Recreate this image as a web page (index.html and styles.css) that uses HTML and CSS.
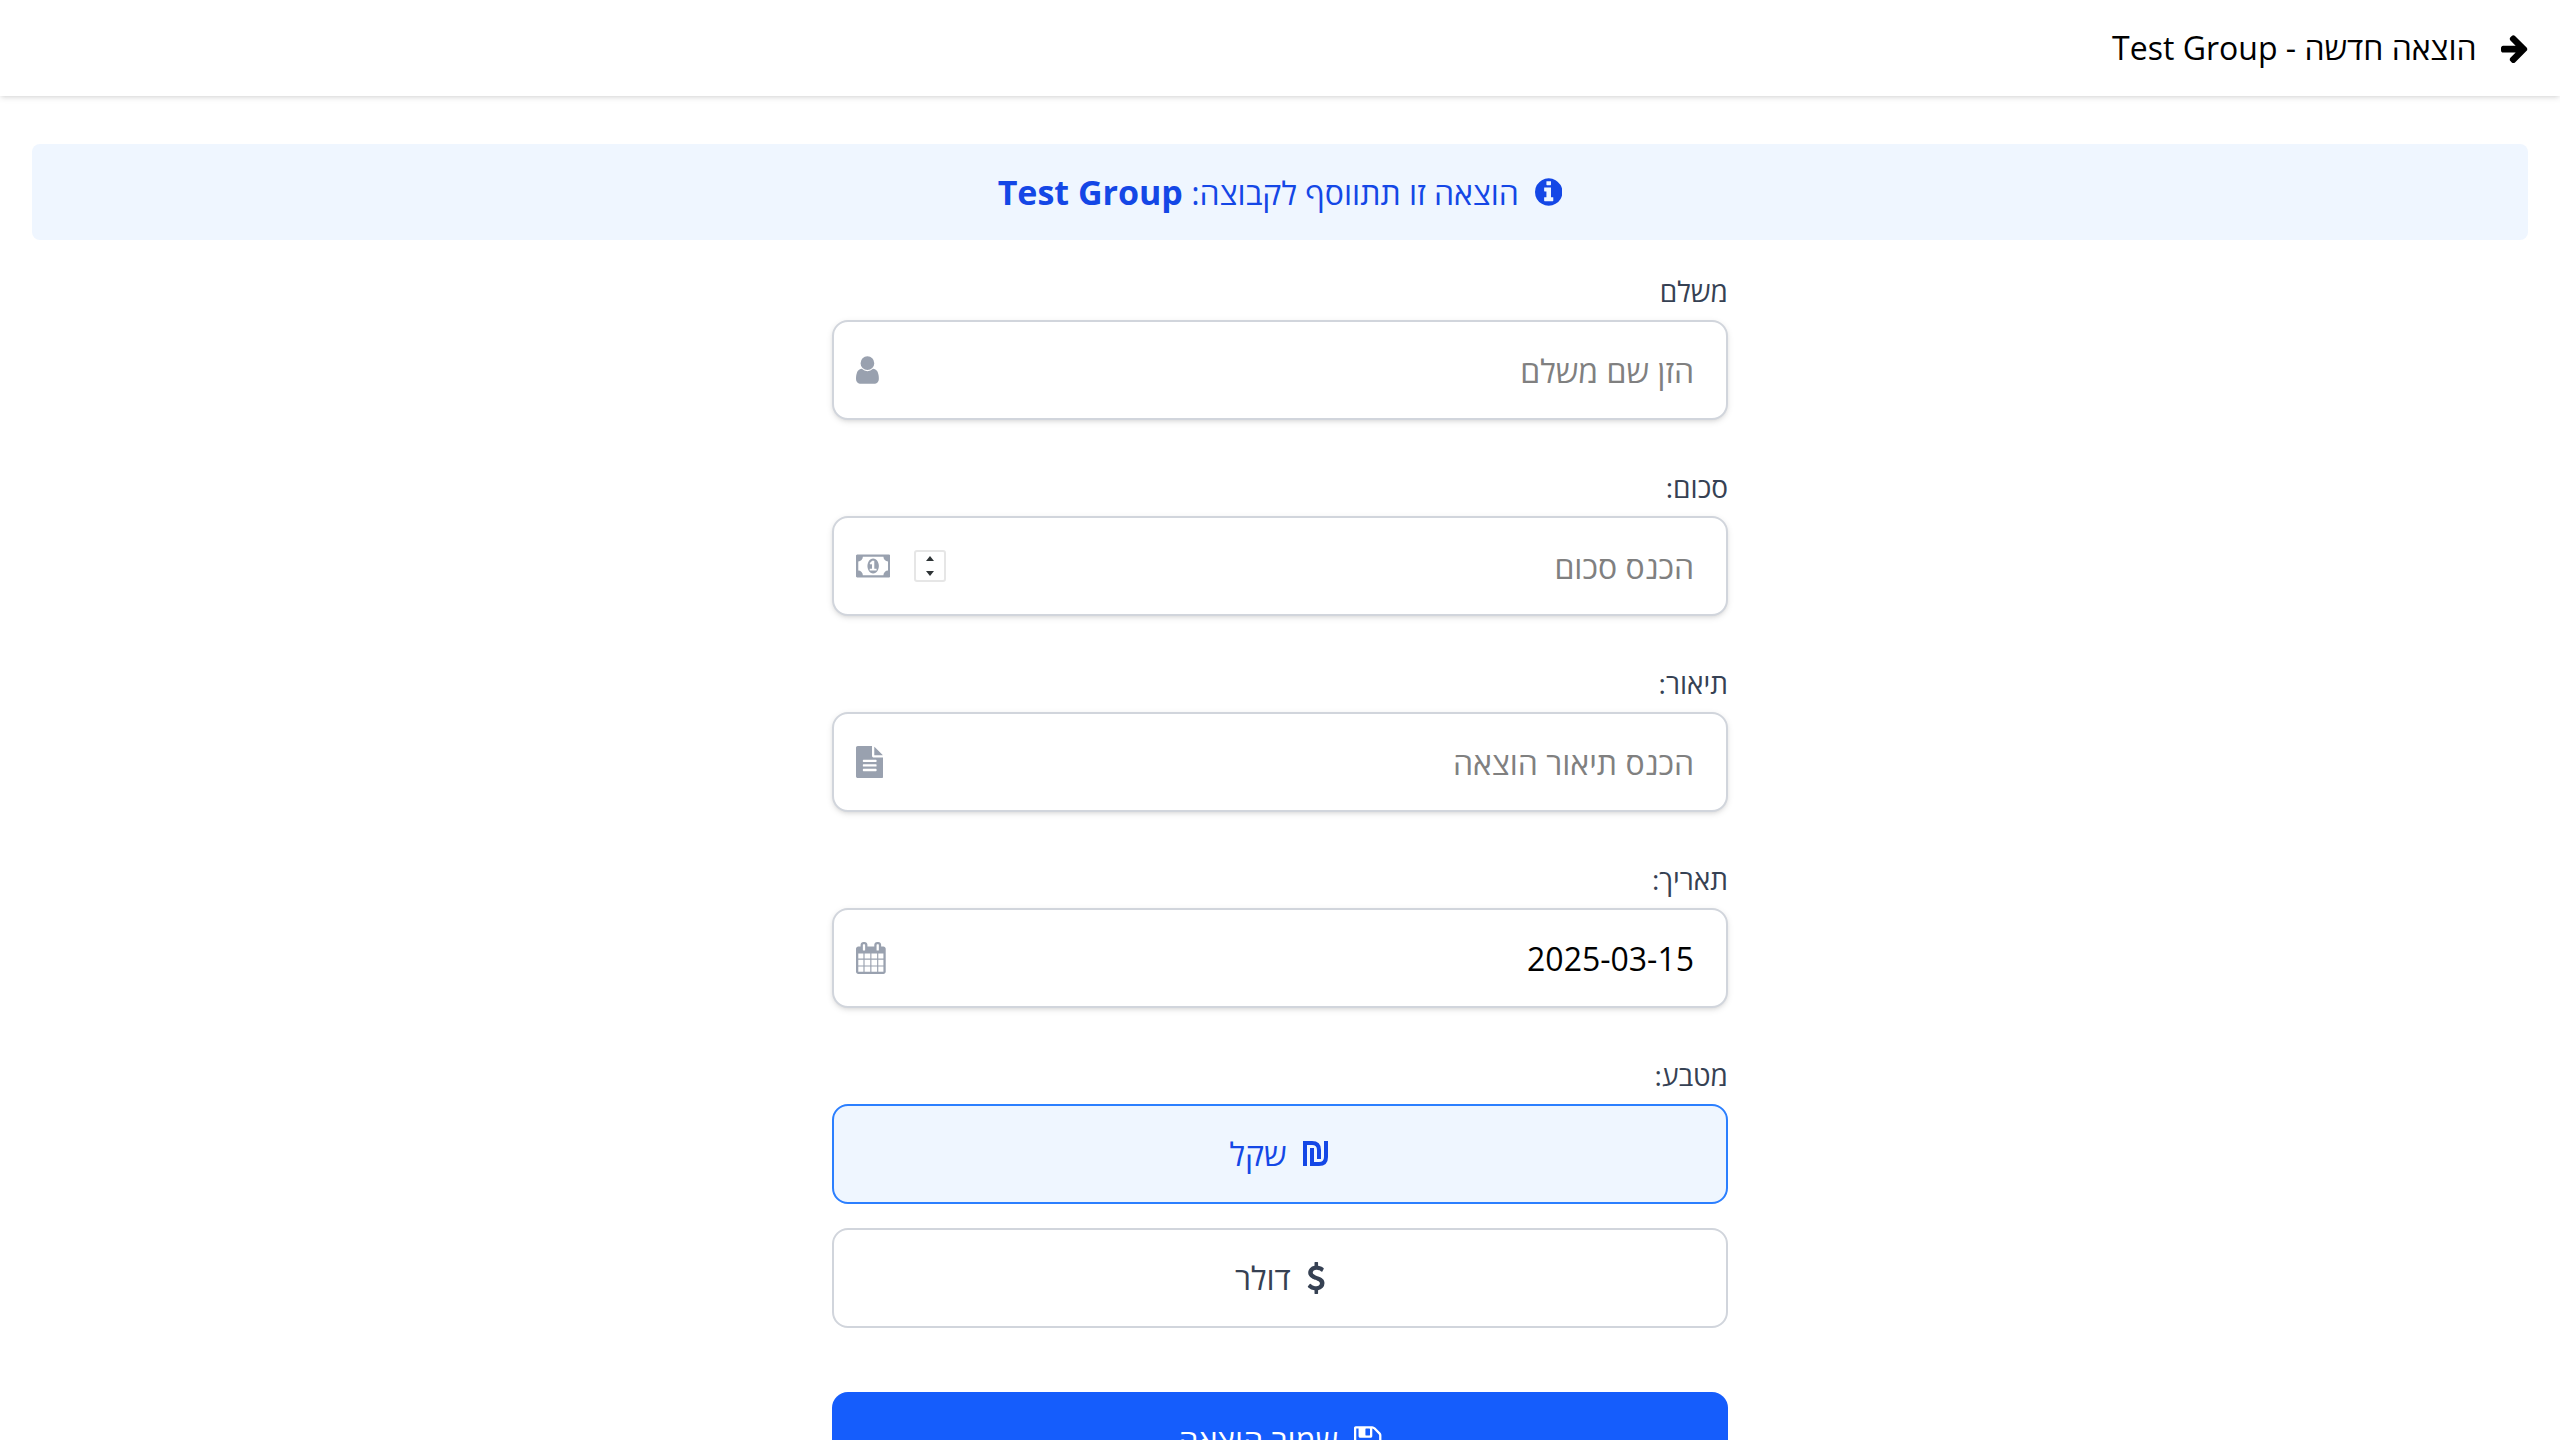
FILE: index.html
```html
<!DOCTYPE html>
<html lang="he" dir="rtl">
<head>
<meta charset="utf-8">
<title>הוצאה חדשה - Test Group</title>
<link rel="stylesheet" href="styles.css">
</head>
<body>
<header class="topbar">
  <button class="back" type="button" aria-label="חזרה">
    <svg class="icon" viewBox="0 0 1536 1792"><g transform="translate(0 1536) scale(1 -1)"><path d="M1472 576q0 -54 -37 -91l-651 -651q-39 -37 -91 -37q-51 0 -90 37l-75 75q-38 38 -38 91t38 91l293 293h-704q-52 0 -84.5 37.5t-32.5 90.5v128q0 53 32.5 90.5t84.5 37.5h704l-293 294q-38 36 -38 90t38 90l75 75q38 38 90 38q53 0 91 -38l651 -651q37 -35 37 -90z"/></g></svg>
  </button>
  <h1 class="title">הוצאה חדשה - Test Group</h1>
</header>
<main class="page">
  <div class="notice">
    <svg class="icon" viewBox="0 0 1536 1792"><g transform="translate(0 1536) scale(1 -1)"><path d="M1024 160v160q0 14 -9 23t-23 9h-96v512q0 14 -9 23t-23 9h-320q-14 0 -23 -9t-9 -23v-160q0 -14 9 -23t23 -9h96v-320h-96q-14 0 -23 -9t-9 -23v-160q0 -14 9 -23t23 -9h448q14 0 23 9t9 23zM896 1056v160q0 14 -9 23t-23 9h-192q-14 0 -23 -9t-9 -23v-160q0 -14 9 -23t23 -9h192q14 0 23 9t9 23zM1536 640q0 -209 -103 -385.5t-279.5 -279.5t-385.5 -103t-385.5 103t-279.5 279.5t-103 385.5t103 385.5t279.5 279.5t385.5 103t385.5 -103t279.5 -279.5t103 -385.5z"/></g></svg>
    <span>הוצאה זו תתווסף לקבוצה: <strong>Test Group</strong></span>
  </div>
  <form class="form">
    <div class="field">
      <label class="label" for="payer">משלם</label>
      <div class="control">
        <input class="input" id="payer" type="text" placeholder="הזן שם משלם">
        <svg class="icon field-icon" viewBox="0 0 1280 1792"><g transform="translate(-256 0)"><path d="M1536 1399q0 109-62.500 187t-150.500 78h-854q-88 0-150.500-78t-62.500-187q0-85 8.500-160.500t31.500-152 58.500-131 94-89 134.500-34.500q131 128 313 128t313-128q76 0 134.500 34.500t94 89 58.500 131 31.500 152 8.500 160.500zm-256-887q0 159-112.500 271.500t-271.500 112.500-271.500-112.500-112.500-271.500 112.500-271.500 271.500-112.500 271.500 112.500 112.500 271.500z"/></g></svg>
      </div>
    </div>
    <div class="field">
      <label class="label" for="amount">סכום:</label>
      <div class="control">
        <input class="input" id="amount" type="number" placeholder="הכנס סכום">
        <svg class="icon field-icon" viewBox="0 0 1920 1792"><g transform="translate(0 1536) scale(1 -1)"><path d="M768 384h384v96h-128v448h-114l-148 -137l77 -80q42 37 55 57h2v-288h-128v-96zM1280 640q0 -70 -21 -142t-59.500 -134t-101.500 -101t-138 -39t-138 39t-101.500 101t-59.500 134t-21 142t21 142t59.500 134t101.500 101t138 39t138 -39t101.500 -101t59.500 -134t21 -142zM1792 384v512q-106 0 -181 75t-75 181h-1152q0 -106 -75 -181t-181 -75v-512q106 0 181 -75t75 -181h1152q0 106 75 181t181 75zM1920 1216v-1152q0 -26 -19 -45t-45 -19h-1792q-26 0 -45 19t-19 45v1152q0 26 19 45t45 19h1792q26 0 45 -19t19 -45z"/></g></svg>
        <svg class="stepper" viewBox="0 0 32 32" aria-hidden="true"><rect x="1" y="1" width="30" height="30" rx="2" fill="#fff" stroke="#e6e6e6" stroke-width="2"/><path d="M12 11h8l-4-5zM12 21h8l-4 5z" fill="#2e3436"/></svg>
      </div>
    </div>
    <div class="field">
      <label class="label" for="description">תיאור:</label>
      <div class="control">
        <input class="input" id="description" type="text" placeholder="הכנס תיאור הוצאה">
        <svg class="icon field-icon" viewBox="0 0 1536 1792"><g transform="translate(0 1536) scale(1 -1)"><path d="M1468 1060q14 -14 28 -36h-472v472q22 -14 36 -28zM992 896h544v-1056q0 -40 -28 -68t-68 -28h-1344q-40 0 -68 28t-28 68v1600q0 40 28 68t68 28h800v-544q0 -40 28 -68t68 -28zM1152 160v64q0 14 -9 23t-23 9h-704q-14 0 -23 -9t-9 -23v-64q0 -14 9 -23t23 -9h704q14 0 23 9t9 23zM1152 416v64q0 14 -9 23t-23 9h-704q-14 0 -23 -9t-9 -23v-64q0 -14 9 -23t23 -9h704q14 0 23 9t9 23zM1152 672v64q0 14 -9 23t-23 9h-704q-14 0 -23 -9t-9 -23v-64q0 -14 9 -23t23 -9h704q14 0 23 9t9 23z"/></g></svg>
      </div>
    </div>
    <div class="field">
      <label class="label" for="date">תאריך:</label>
      <div class="control">
        <input class="input" id="date" type="text" value="2025-03-15">
        <svg class="icon field-icon" viewBox="0 0 1664 1792"><g transform="translate(0 1536) scale(1 -1)"><path d="M128 -128h288v288h-288v-288zM480 -128h320v288h-320v-288zM128 224h288v320h-288v-320zM480 224h320v320h-320v-320zM128 608h288v288h-288v-288zM864 -128h320v288h-320v-288zM480 608h320v288h-320v-288zM1248 -128h288v288h-288v-288zM864 224h320v320h-320v-320zM512 1088v288q0 13 -9.500 22.500t-22.500 9.500h-64q-13 0 -22.500 -9.500t-9.500 -22.500v-288q0 -13 9.500 -22.500t22.500 -9.500h64q13 0 22.500 9.500t9.500 22.500zM1248 224h288v320h-288v-320zM864 608h320v288h-320v-288zM1248 608h288v288h-288v-288zM1280 1088v288q0 13 -9.500 22.500t-22.500 9.500h-64q-13 0 -22.500 -9.500t-9.500 -22.500v-288q0 -13 9.500 -22.500t22.500 -9.500h64q13 0 22.500 9.500t9.500 22.500zM1664 1152v-1280q0 -52 -38 -90t-90 -38h-1408q-52 0 -90 38t-38 90v1280q0 52 38 90t90 38h128v96q0 66 47 113t113 47h64q66 0 113 -47t47 -113v-96h384v96q0 66 47 113t113 47h64q66 0 113 -47t47 -113v-96h128q52 0 90 -38t38 -90z"/></g></svg>
      </div>
    </div>
    <div class="currency" role="group" aria-labelledby="currency-label">
      <div class="label" id="currency-label">מטבע:</div>
      <div class="options">
        <button class="option option-selected" type="button" aria-pressed="true">
          <svg class="icon" viewBox="0 0 28 32"><path d="M2 28V5H9Q16 5 16 12V21M9 10V26H16Q23 26 23 19V3" fill="none" stroke="currentColor" stroke-width="4"/></svg>
          <span>שקל</span>
        </button>
        <button class="option" type="button" aria-pressed="false">
          <svg class="icon" viewBox="0 0 1024 1792"><g transform="translate(0 1536) scale(1 -1)"><path d="M978 351q0 -153 -99.500 -263.500t-258.500 -136.500v-175q0 -14 -9 -23t-23 -9h-135q-13 0 -22.500 9.500t-9.500 22.500v175q-66 9 -127.500 31t-101.500 44.500t-74 48t-46.500 37.500t-17.500 18q-17 21 -2 41l103 135q7 10 23 12q15 2 24 -9l2 -2q113 -99 243 -125q37 -8 74 -8q81 0 142.500 43t61.500 122q0 28 -15 53t-33.500 42t-58.500 37.500t-66 32t-80 32.500q-39 16 -61.500 25t-61.500 26.500t-62.500 31t-56.500 35.500t-53.500 42.500t-43.500 49t-35.500 58t-21 66.500t-8.500 78q0 138 98 242t255 134v180q0 13 9.500 22.500t22.500 9.500h135q14 0 23 -9t9 -23v-176q57 -6 110.500 -23t87 -33.500t63.500 -37.500t39 -29t15 -14q17 -18 5 -38l-81 -146q-8 -15 -23 -16q-14 -3 -27 7q-3 3 -14.500 12t-39 26.500t-58.500 32t-74.500 26t-85.500 11.500q-95 0 -155 -43t-60 -111q0 -26 8.500 -48t29.500 -41.500t39.500 -33t56 -31t60.500 -27t70 -27.500q53 -20 81 -31.500t76 -35t75.500 -42.500t62 -50t53 -63.500t31.500 -76.500t13 -94z"/></g></svg>
          <span>דולר</span>
        </button>
      </div>
    </div>
    <button class="save" type="submit">
      <svg class="icon" viewBox="0 0 1536 1792"><g transform="translate(0 1536) scale(1 -1)"><path d="M384 0h768v384h-768v-384zM1280 0h128v896q0 14 -10 38.500t-20 34.500l-281 281q-10 10 -34 20t-39 10v-416q0 -40 -28 -68t-68 -28h-576q-40 0 -68 28t-28 68v416h-128v-1280h128v416q0 40 28 68t68 28h832q40 0 68 -28t28 -68v-416zM896 928v320q0 13 -9.500 22.500t-22.500 9.500h-192q-13 0 -22.500 -9.500t-9.500 -22.500v-320q0 -13 9.500 -22.500t22.500 -9.500h192q13 0 22.500 9.500t9.500 22.500zM1536 896v-928q0 -40 -28 -68t-68 -28h-1344q-40 0 -68 28t-28 68v1344q0 40 28 68t68 28h928q40 0 88 -20t76 -48l280 -280q28 -28 48 -76t20 -88z"/></g></svg>
      <span>שמור הוצאה</span>
    </button>
  </form>
</main>
</body>
</html>
```
FILE: styles.css
```css
* { box-sizing: border-box; }

body {
  margin: 0;
  background: #fff;
  color: #000;
  font-family: "Open Sans", sans-serif;
  font-size: 32px;
  line-height: 48px;
}

button, input { font: inherit; color: inherit; }
button { cursor: pointer; }

.icon {
  display: block;
  flex: none;
  width: auto;
  height: 32px;
  fill: currentColor;
  fill-rule: evenodd;
}

.topbar {
  display: flex;
  align-items: center;
  gap: 24px;
  padding: 24px 32px;
  background: #fff;
  box-shadow: 0 2px 6px rgba(0, 0, 0, .1), 0 2px 4px -2px rgba(0, 0, 0, .1);
}

.back { padding: 0; border: 0; background: none; }
.title { margin: 0; font-size: 32px; font-weight: 400; }

.page { padding: 48px 32px; }

.notice {
  display: flex;
  align-items: center;
  justify-content: center;
  gap: 16px;
  height: 96px;
  margin-bottom: 32px;
  border-radius: 8px;
  background: #eff6ff;
  color: #1447e6;
}

.notice strong { font-size: 34px; font-weight: 700; }

.form {
  display: flex;
  flex-direction: column;
  gap: 48px;
  max-width: 896px;
  margin: 0 auto;
}

.label {
  display: block;
  margin-bottom: 10px;
  color: #364153;
  font-size: 28px;
  line-height: 38px;
}

.control { position: relative; }

.input {
  display: block;
  width: 100%;
  padding: 24px 32px 24px 80px;
  height: 100px;
  border: 2px solid #d1d5dc;
  border-radius: 16px;
  background: #fff;
  box-shadow: 0 2px 6px rgba(0, 0, 0, .1), 0 2px 4px -2px rgba(0, 0, 0, .1);
  appearance: textfield;
}

.input::placeholder { color: #808080; }
.input::-webkit-inner-spin-button { appearance: none; }

.field-icon, .stepper {
  position: absolute;
  inset-block: 0;
  left: 24px;
  margin-block: auto;
  color: #99a1af;
  pointer-events: none;
}

.stepper { left: 82px; width: 32px; height: 32px; }

.options { display: flex; flex-direction: column; gap: 24px; }

.option, .save {
  display: flex;
  align-items: center;
  justify-content: center;
  gap: 16px;
  width: 100%;
  padding: 24px;
  border: 2px solid #d1d5dc;
  border-radius: 16px;
  background: #fff;
  color: #364153;
}

.option-selected {
  border-color: #2b7fff;
  background: #eff6ff;
  color: #1447e6;
}

.save {
  margin-top: 16px;
  border: 0;
  background: #155dfc;
  color: #fff;
}
```
